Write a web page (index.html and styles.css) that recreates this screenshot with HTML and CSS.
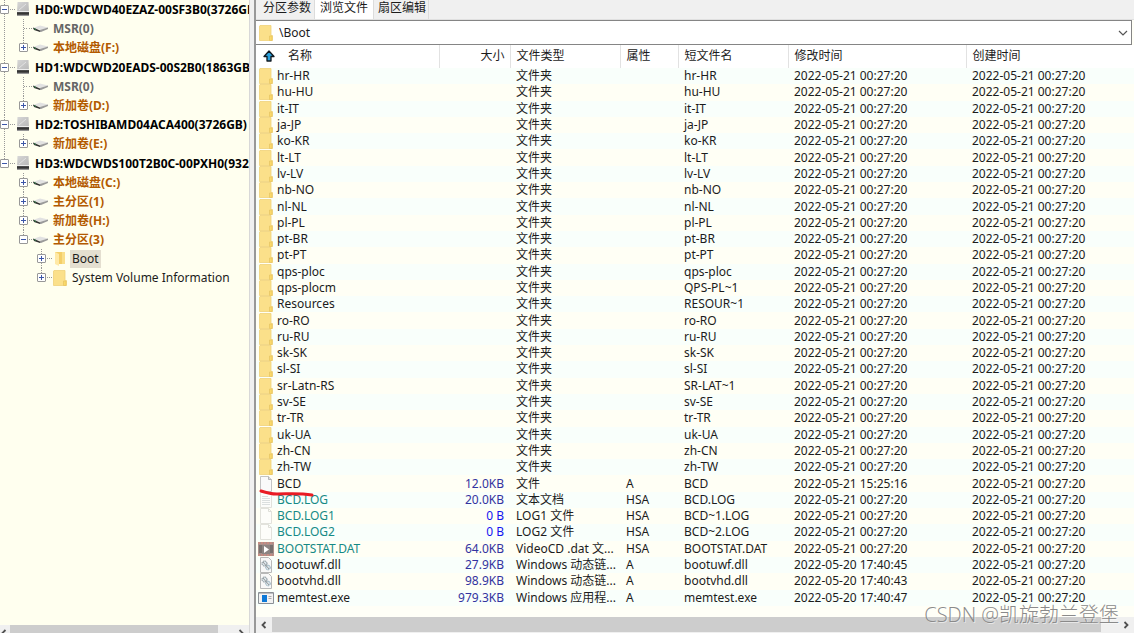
FILE: index.html
```html
<!DOCTYPE html>
<html lang="zh-CN">
<head>
<meta charset="utf-8">
<title>浏览文件</title>
<link rel="stylesheet" href="styles.css">
</head>
<body>
<svg class="defs" aria-hidden="true">
  <defs>
    <linearGradient id="metal" x1="0" y1="0" x2="1" y2="1"><stop offset="0" stop-color="#d8d8d8"/><stop offset="0.5" stop-color="#c6c6c6"/><stop offset="1" stop-color="#b8b8b8"/></linearGradient>
    <linearGradient id="base" x1="0" y1="0" x2="0" y2="1"><stop offset="0" stop-color="#555"/><stop offset="0.5" stop-color="#2a2a2a"/><stop offset="1" stop-color="#bbb"/></linearGradient>
    <symbol id="disk" viewBox="0 0 14 15"><path d="M1.500 0h11L13 10H1z" fill="url(#metal)"/><path d="M3 8l7-6" stroke="#e2e2e2"/><path d="M1 10h12v4H1z" fill="url(#base)"/><path d="M1 9.500h12" stroke="#ececec"/></symbol>
    <symbol id="volume" viewBox="0 0 17 9"><path d="M1 4l7-2.500 8 2L9 6z" fill="#e2e2e2"/><path d="M1 3.500l7 3V8L2 6z" fill="#333"/><path d="M8 6l8-2.500V5L9 8H8z" fill="#9a9a9a"/><path d="M2 4.500l2 1" stroke="#2f7a45"/></symbol>
    <symbol id="folder" viewBox="0 0 14 16"><path d="M1 .5h11v10h1.500v5H.5V1z" fill="#fbe08a" stroke="#f0d27a" stroke-width=".8"/><path d="M10.500 11h2.500v4.500h-2.500z" fill="#fbd968" stroke="#e8c765" stroke-width=".8"/></symbol>
    <symbol id="open" viewBox="0 0 14 16"><path d="M2 1h9v12H2z" fill="#f4cf69"/><path d="M2 1l4 2v12l-4-2z" fill="#ffe9a6"/><path d="M9 1h3v12H9z" fill="#fadf8a"/></symbol>
    <symbol id="file" viewBox="0 0 14 16"><path d="M1.500.5h8l3 3v12h-11z" fill="#fafafa" stroke="#c4c4c4"/><path d="M9.500.5v3h3" fill="#ddd" stroke="#b5b5b5"/></symbol>
    <symbol id="text" viewBox="0 0 14 16"><path d="M1.500.5h8l3 3v12h-11z" fill="#fcfcfa" stroke="#e2e2dc"/><path d="M3 4.500h6M3 6.500h8M3 8.500h8M3 10.500h8M3 12.500h8" stroke="#dbdfdf"/></symbol>
    <symbol id="pale" viewBox="0 0 14 16"><path d="M1.500.5h8l3 3v12h-11z" fill="#fdfdfa" stroke="#e2e2dc"/><path d="M9.500.5v3h3" fill="none" stroke="#deded8"/></symbol>
    <symbol id="video" viewBox="0 0 16 14"><path d="M0 0h16v14H0z" fill="#a88f8b"/><path d="M0 1h16M0 13h16" stroke="#c58c83" stroke-width="2" stroke-dasharray="2 1"/><path d="M1 3h14v8H1z" fill="#77706e"/><path d="M4 3h8v9H4z" fill="#8c8583"/><path d="M6 4l5 3.500L6 11z" fill="#fff"/></symbol>
    <symbol id="dll" viewBox="0 0 14 16"><path d="M1.500.5h8l3 3v12h-11z" fill="#f8f8f8" stroke="#b8b8b8"/><g fill="#dce5ea" stroke="#7e8a91"><circle cx="5.500" cy="6.500" r="2.500" stroke-dasharray="1.500 .5"/><circle cx="9" cy="10.500" r="2.300" stroke="#8ba9b8" stroke-dasharray="1.500 .5"/></g><path d="M4 5l6 7" stroke="#777" stroke-width=".7"/></symbol>
    <symbol id="exe" viewBox="0 0 16 12"><path d="M.5.5h15v11H.5z" fill="#f2f2f2" stroke="#8a9096"/><path d="M1 1.500h14" stroke="#b9bdc1"/><path d="M4 3h5v7H4z" fill="#0b78d7"/><path d="M10.500 4.500h3M10.500 6.500h3" stroke="#aaa"/></symbol>
    <symbol id="up" viewBox="0 0 12 12"><path d="M6 1l5 5.500H8V11H4V6.500H1z" fill="#29a0dc" stroke="#10181f" stroke-width="1.300" stroke-linejoin="round"/></symbol>
    <symbol id="left" viewBox="0 0 8 8"><path d="M5.500 1L2.500 4l3 3" fill="none" stroke="#505050" stroke-width="1.800"/></symbol>
    <symbol id="right" viewBox="0 0 8 8"><path d="M2.500 1l3 3-3 3" fill="none" stroke="#505050" stroke-width="1.800"/></symbol>
  </defs>
</svg>
<div class="app">
  <nav class="sidebar" aria-label="磁盘">
    <ul class="tree" id="tree"></ul>
    <div class="scroll scroll-side">
      <button class="arrow" aria-label="向左"><svg><use href="#left"/></svg></button>
      <span class="thumb"></span>
      <button class="arrow" aria-label="向右"><svg><use href="#right"/></svg></button>
    </div>
  </nav>
  <main class="main">
    <div class="tabs">
      <button class="tab">分区参数</button>
      <button class="tab active">浏览文件</button>
      <button class="tab">扇区编辑</button>
    </div>
    <div class="path">
      <svg class="icon"><use href="#folder"/></svg>
      <input type="text" value="\Boot" aria-label="路径">
      <button class="drop" aria-label="展开"><svg viewBox="0 0 10 6"><path d="M1 1l4 4 4-4" fill="none" stroke="#555" stroke-width="1.200"/></svg></button>
    </div>
    <div class="list">
      <table>
        <colgroup><col class="c-name"><col class="c-size"><col class="c-type"><col class="c-attr"><col class="c-short"><col class="c-time"><col></colgroup>
        <thead><tr>
          <th><span class="name"><svg class="up"><use href="#up"/></svg>名称</span></th>
          <th class="size">大小</th><th>文件类型</th><th>属性</th><th>短文件名</th><th>修改时间</th><th>创建时间</th>
        </tr></thead>
        <tbody id="files"></tbody>
      </table>
    </div>
    <div class="scroll scroll-main">
      <button class="arrow" aria-label="向左"><svg><use href="#left"/></svg></button>
      <span class="thumb"></span>
      <button class="arrow" aria-label="向右"><svg><use href="#right"/></svg></button>
    </div>
  </main>
  <div class="watermark">CSDN @凯旋勃兰登堡</div>
</div>
<script src="app.js"></script>
</body>
</html>
```
FILE: app.js
```js
const STAMP = '2022-05-21 00:27:20';
const folders = ['hr-HR', 'hu-HU', 'it-IT', 'ja-JP', 'ko-KR', 'lt-LT', 'lv-LV', 'nb-NO', 'nl-NL', 'pl-PL', 'pt-BR', 'pt-PT', 'qps-ploc', 'qps-plocm', 'Resources', 'ro-RO', 'ru-RU', 'sk-SK', 'sl-SI', 'sr-Latn-RS', 'sv-SE', 'tr-TR', 'uk-UA', 'zh-CN', 'zh-TW'];
const shortNames = { 'qps-plocm': 'QPS-PL~1', 'Resources': 'RESOUR~1', 'sr-Latn-RS': 'SR-LAT~1' };
const files = folders.map(n => ['folder', n, '', '文件夹', '', shortNames[n] || n, STAMP]).concat([
  ['file', 'BCD', '12.0KB', '文件', 'A', 'BCD', '2022-05-21 15:25:16'],
  ['text', 'BCD.LOG', '20.0KB', '文本文档', 'HSA', 'BCD.LOG', STAMP],
  ['pale', 'BCD.LOG1', '0 B', 'LOG1 文件', 'HSA', 'BCD~1.LOG', STAMP],
  ['pale', 'BCD.LOG2', '0 B', 'LOG2 文件', 'HSA', 'BCD~2.LOG', STAMP],
  ['video', 'BOOTSTAT.DAT', '64.0KB', 'VideoCD .dat 文...', 'HSA', 'BOOTSTAT.DAT', STAMP],
  ['dll', 'bootuwf.dll', '27.9KB', 'Windows 动态链...', 'A', 'bootuwf.dll', '2022-05-20 17:40:45'],
  ['dll', 'bootvhd.dll', '98.9KB', 'Windows 动态链...', 'A', 'bootvhd.dll', '2022-05-20 17:40:43'],
  ['exe', 'memtest.exe', '979.3KB', 'Windows 应用程...', 'A', 'memtest.exe', '2022-05-20 17:40:47']
]);
const mark = '<svg class="mark" viewBox="0 0 56 8"><path d="M2 2C8 4 12 5 18 5C30 5 40 4 53 6" fill="none" stroke="#ea1c24" stroke-width="3" stroke-linecap="round"/></svg>';

document.getElementById('files').innerHTML = files.map(([icon, name, size, type, attr, short, time]) =>
  `<tr class="${attr === 'HSA' ? 'system' : ''}"><td><span class="name"><svg class="icon ${icon}"><use href="#${icon}"/></svg>${name}${name === 'BCD' ? mark : ''}</span></td>` +
  `<td class="size${size === '0 B' ? ' zero' : ''}">${size}</td><td>${type}</td><td>${attr}</td><td>${short}</td><td>${time}</td><td>${STAMP}</td></tr>`).join('');

const msr = { icon: 'volume', label: 'MSR(0)', cls: 'muted', sign: '' };
const vol = (label, kids) => ({ icon: 'volume', label, cls: 'vol', sign: kids ? '-' : '+', kids });
const disk = (label, kids) => ({ icon: 'disk', label, cls: 'disk', sign: '-', kids });
const tree = [
  disk('HD0:WDCWD40EZAZ-00SF3B0(3726GB)', [msr, vol('本地磁盘(F:)')]),
  disk('HD1:WDCWD20EADS-00S2B0(1863GB)', [msr, vol('新加卷(D:)')]),
  disk('HD2:TOSHIBAMD04ACA400(3726GB)', [vol('新加卷(E:)')]),
  disk('HD3:WDCWDS100T2B0C-00PXH0(932GB)', [
    vol('本地磁盘(C:)'), vol('主分区(1)'), vol('新加卷(H:)'),
    vol('主分区(3)', [
      { icon: 'open', label: 'Boot', cls: 'dir selected', sign: '+' },
      { icon: 'folder', label: 'System Volume Information', cls: 'dir', sign: '+' }
    ])
  ])
];
const render = nodes => nodes.map(n =>
  `<li><div class="node ${n.cls}">` +
  (n.sign ? `<button class="toggle" aria-label="${n.sign === '+' ? '展开' : '折叠'}"><svg viewBox="0 0 7 7"><path d="M1 3.500h5${n.sign === '+' ? 'M3.500 1v5' : ''}" stroke="#3c56a8"/></svg></button>` : '<span class="stub"></span>') +
  `<span class="slot"><svg class="${n.icon}"><use href="#${n.icon}"/></svg></span><span class="label">${n.label}</span></div>` +
  (n.kids ? `<ul>${render(n.kids)}</ul>` : '') + '</li>').join('');
document.getElementById('tree').innerHTML = render(tree);
```
FILE: styles.css
```css
* { box-sizing: border-box; }
html, body { height: 100%; margin: 0; overflow: hidden; }
body, button, input { font: 12px/16px "Noto Sans", "Noto Sans CJK SC", sans-serif; color: #1c1c1c; }
button { border: 0; padding: 0; background: none; }
svg { display: block; flex: none; }
.defs { position: absolute; width: 0; height: 0; }
.app { display: flex; height: 100vh; background: #f0f0f0; overflow: hidden; }

.sidebar { flex: 0 0 250px; display: flex; flex-direction: column; background: #ffffef; border-right: 1px solid #d8d8d8; overflow: hidden; }
.tree { flex: 1; overflow: hidden; }
.tree, .tree ul { list-style: none; margin: 0; padding: 0; }
.tree ul { padding-left: 18px; }
.tree > li:nth-child(odd) { padding-bottom: 1px; }
.tree li { background: repeating-linear-gradient(#999 0 1px, transparent 1px 2px) 4px 0 / 1px 100% no-repeat; }
.tree li li { background-position-x: 5px; }
.tree li:last-child { background-size: 1px 9px; }
.node { display: flex; align-items: center; height: 19px; padding-left: 1px; white-space: nowrap; font-weight: 700; }
.node.disk { padding-left: 0; }
.toggle { flex: none; width: 9px; height: 9px; border: 1px solid #989898; border-radius: 1px; background: #fff; }
.toggle svg { width: 7px; height: 7px; }
.stub { flex: none; width: 9px; height: 1px; background: repeating-linear-gradient(90deg, transparent 0 1px, #999 1px 2px) 4px 0 no-repeat; }
.slot { flex: none; display: flex; align-items: center; justify-content: flex-end; width: 21px; height: 19px; margin-right: 4px; background: repeating-linear-gradient(90deg, transparent 0 1px, #999 1px 2px) 0 9px / 6px 1px no-repeat; }
.disk .slot { width: 21px; margin-right: 5px; }
svg.disk { width: 14px; height: 15px; }
svg.volume { width: 17px; height: 9px; }
svg.folder, svg.open { width: 14px; height: 16px; }
.disk { color: #000; }
.muted { color: #666; }
.vol { color: #b35a00; }
.dir { font-weight: 400; }
.dir .slot { width: 21px; margin-right: 3px; }
.label { padding: 0 2px 0 0; }
.dir .label { padding: 1px 2px; }
.selected .label { background: #e4dfd0; }

.scroll { display: flex; align-items: center; background: #f0f0f0; }
.scroll .arrow { flex: none; display: grid; place-items: center; width: 16px; height: 15px; }
.scroll .arrow svg { width: 8px; height: 8px; }
.thumb { flex: 1; align-self: stretch; background: #cdcdcd; }
.scroll-side { height: 15px; margin-bottom: -7px; }
.scroll-side .arrow:first-child { width: 10px; }
.scroll-side .thumb { margin-right: 15px; }
.scroll-side .arrow:first-child svg { margin-right: 6px; }
.scroll-main { height: 16px; border-bottom: 1px solid #f0f0f0; }
.scroll-main .thumb { margin-right: 17px; }

.main { flex: 1; min-width: 0; display: flex; flex-direction: column; margin-left: 4px; border-left: 2px solid #989898; background: #fffff7; }
.tabs { display: flex; height: 20px; background: #f0f0f0; border-bottom: 1px solid #e0e0e0; }
.tab { padding: 0 3px 3px 7px; border-right: 1px solid #dcdcdc; }
.tab.active { padding: 0 5px 7px; background: #fff; }
.tab:last-child { padding-left: 4px; padding-right: 2px; }
.path { display: flex; align-items: center; height: 25px; margin-right: 2px; padding-left: 3px; border: 1px solid #858585; border-left: 0; background: #fff; }
.path input { flex: 1; min-width: 0; margin-left: 6px; padding: 0; border: 0; background: none; outline: 0; }
.drop { display: grid; place-items: center; width: 16px; height: 20px; }
.drop svg { width: 10px; height: 6px; }

.list { flex: 1; min-height: 0; padding-bottom: 11px; }
table { width: 100%; height: 100%; table-layout: fixed; border-collapse: collapse; }
.c-name { width: 183px; }
.c-size { width: 71px; }
.c-type, .c-short { width: 110px; }
.c-attr { width: 58px; }
.c-time { width: 178px; }
th, td { padding: 0 0 0 6px; text-align: left; font-weight: 400; white-space: nowrap; line-height: 14px; overflow: hidden; }
th { height: 23px; padding-bottom: 1px; background: #fff; border-right: 1px solid #e2e2e2; }
th:last-child { border-right: 0; }
th:first-child, td:first-child { padding-left: 3px; overflow: visible; }
th.size { padding: 0 5px 1px 0; text-align: right; }
td.size { padding: 0 6px 0 0; text-align: right; }
tbody tr:nth-child(odd) { background: #f9fffb; }
tbody tr:nth-child(even) { background: #fffff5; }
.name { display: flex; align-items: center; height: 14px; position: relative; }
th .name { gap: 13px; padding-left: 4px; }
.up { width: 12px; height: 12px; }
.icon { width: 14px; height: 16px; }
td .icon { margin-right: 4px; }
td .icon.video, td .icon.exe { width: 16px; margin: 0 3px 0 -1px; }
.icon.video { height: 14px; }
.icon.exe { height: 12px; }
td.size { color: #3333a0; }
td.size.zero { color: #1414f0; }
.system .name { color: #168a86; }
.mark { position: absolute; z-index: 1; left: 0; top: 12px; width: 56px; height: 8px; }

.watermark { position: absolute; right: 15px; bottom: 5px; font-family: "Open Sans", "Noto Sans CJK SC", sans-serif; font-size: 20px; font-weight: 300; line-height: 26px; color: #8a8a8a; text-shadow: 1px 1px 0 #fff8; pointer-events: none; }
```
